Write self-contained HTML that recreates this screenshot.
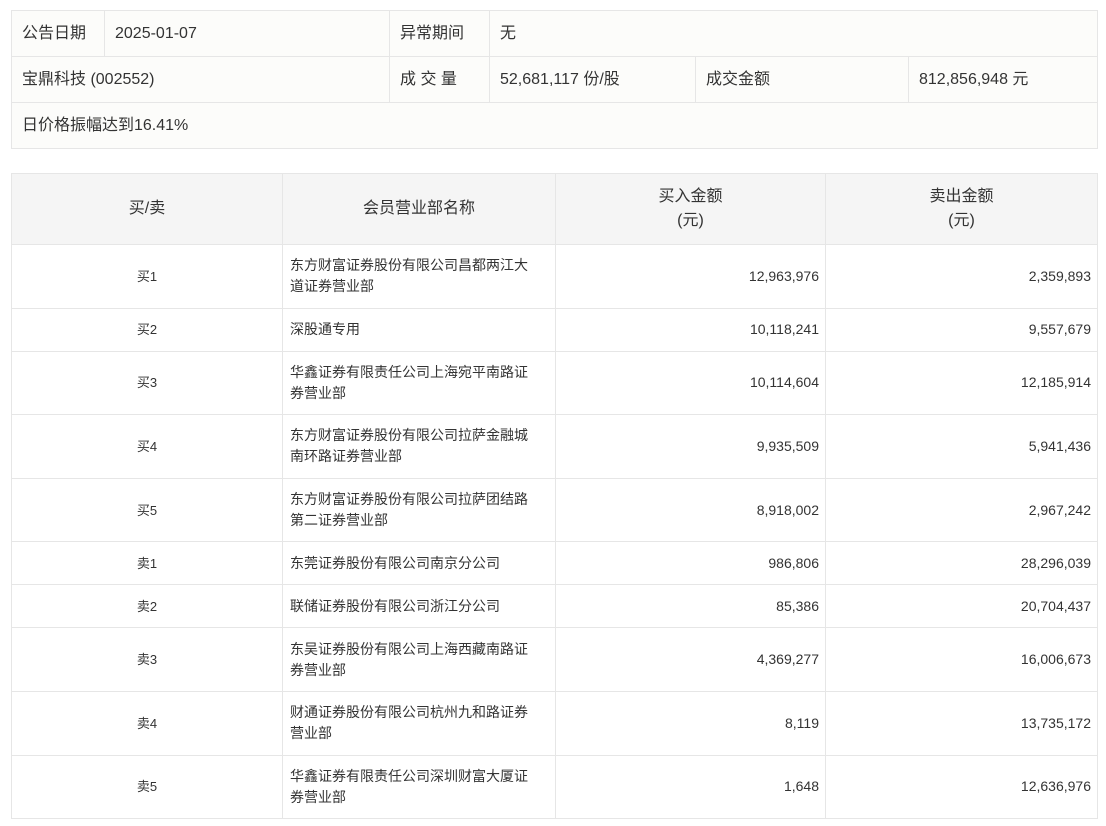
<!DOCTYPE html>
<html><head><meta charset="utf-8"><style>
body{margin:0;background:#fff;font-family:"Liberation Sans","Noto Sans CJK SC",sans-serif;color:#333;}
table{border-collapse:collapse;position:absolute;left:11px;width:1087px;table-layout:fixed;}
td,th{border:1px solid #e6e6e6;padding:0;vertical-align:middle;}
#info{top:10px;background:#fcfcfa;font-size:16px;}
#info td{height:46px;padding-left:10px;line-height:20px;box-sizing:border-box;}
#main{top:173px;font-size:14px;}
#main th{background:#f5f5f5;font-weight:normal;font-size:16px;height:71px;line-height:24px;box-sizing:border-box;}
#main td{line-height:21px;box-sizing:border-box;}
#main td.c{text-align:center;font-size:13px;}
#main td.n{padding-left:7px;padding-right:20px;}
#main td.r{text-align:right;padding-right:6px;}
tr.t td{height:63.6px;} tr.s td{height:43px;}
</style></head><body>
<table id="info">
<colgroup><col style="width:93px"><col style="width:285px"><col style="width:100px"><col style="width:206px"><col style="width:213px"><col></colgroup>
<tr><td>公告日期</td><td>2025-01-07</td><td>异常期间</td><td colspan="3">无</td></tr>
<tr><td colspan="2">宝鼎科技 (002552)</td><td>成 交 量</td><td>52,681,117 份/股</td><td>成交金额</td><td>812,856,948 元</td></tr>
<tr><td colspan="6">日价格振幅达到16.41%</td></tr>
</table>
<table id="main">
<colgroup><col style="width:271px"><col style="width:273px"><col style="width:270px"><col></colgroup>
<tr><th>买/卖</th><th>会员营业部名称</th><th>买入金额<br>(元)</th><th>卖出金额<br>(元)</th></tr>
<tr class="t"><td class="c">买1</td><td class="n">东方财富证券股份有限公司昌都两江大道证券营业部</td><td class="r">12,963,976</td><td class="r">2,359,893</td></tr>
<tr class="s"><td class="c">买2</td><td class="n">深股通专用</td><td class="r">10,118,241</td><td class="r">9,557,679</td></tr>
<tr class="t"><td class="c">买3</td><td class="n">华鑫证券有限责任公司上海宛平南路证券营业部</td><td class="r">10,114,604</td><td class="r">12,185,914</td></tr>
<tr class="t"><td class="c">买4</td><td class="n">东方财富证券股份有限公司拉萨金融城南环路证券营业部</td><td class="r">9,935,509</td><td class="r">5,941,436</td></tr>
<tr class="t"><td class="c">买5</td><td class="n">东方财富证券股份有限公司拉萨团结路第二证券营业部</td><td class="r">8,918,002</td><td class="r">2,967,242</td></tr>
<tr class="s"><td class="c">卖1</td><td class="n">东莞证券股份有限公司南京分公司</td><td class="r">986,806</td><td class="r">28,296,039</td></tr>
<tr class="s"><td class="c">卖2</td><td class="n">联储证券股份有限公司浙江分公司</td><td class="r">85,386</td><td class="r">20,704,437</td></tr>
<tr class="t"><td class="c">卖3</td><td class="n">东吴证券股份有限公司上海西藏南路证券营业部</td><td class="r">4,369,277</td><td class="r">16,006,673</td></tr>
<tr class="t"><td class="c">卖4</td><td class="n">财通证券股份有限公司杭州九和路证券营业部</td><td class="r">8,119</td><td class="r">13,735,172</td></tr>
<tr class="t"><td class="c">卖5</td><td class="n">华鑫证券有限责任公司深圳财富大厦证券营业部</td><td class="r">1,648</td><td class="r">12,636,976</td></tr>
</table>
</body></html>
